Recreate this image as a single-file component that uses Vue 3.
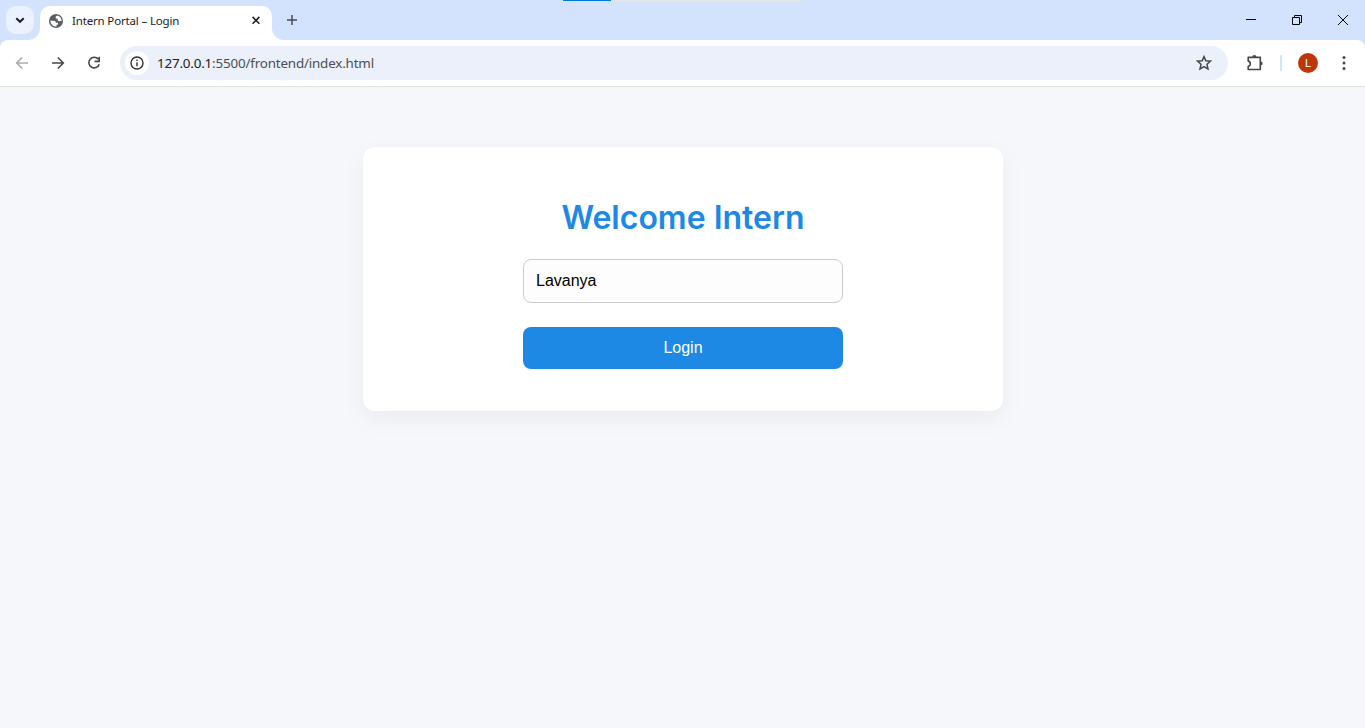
<script setup>
import { ref } from 'vue'

const name = ref('Lavanya')
</script>

<template>
  <div class="window">
    <header class="tabstrip">
      <span class="loading-track"><span class="loading-value"></span></span>
      <button class="tab-search" aria-label="Search tabs">
        <svg width="28" height="28" viewBox="0 0 28 28"><path d="M10.300 12.200 14 15.800l3.700-3.600" fill="none" stroke="#1c1e22" stroke-width="1.900" /></svg>
      </button>
      <div class="tab">
        <svg class="globe" width="14" height="14" viewBox="0 0 14 14">
          <circle cx="7" cy="7" r="7" fill="#5b5f64" />
          <path d="M8.300 1.500C7 2.100 6.300 2.900 6.700 3.900c.5.900 1.700.4 2 1.300.3 1-.2 1.500.7 1.900.8.400 1.800-.3 3.200.1A5.700 5.700 0 0 0 8.300 1.500Z" fill="#fff" />
          <path d="M1.400 6.700h2.800c1.900 0 2.700.8 2.700 2.100H9v1.100c0 .8-.7.800-1.500.9v1.700A5.700 5.700 0 0 1 1.400 6.700Z" fill="#fff" />
        </svg>
        <span class="tab-title">Intern Portal – Login</span>
        <svg class="tab-close" width="16" height="16" viewBox="0 0 16 16"><path d="m4.600 3.900 6.800 6.800m0-6.800-6.800 6.800" stroke="#1f2023" stroke-width="1.600" /></svg>
      </div>
      <svg class="new-tab" width="16" height="16" viewBox="0 0 16 16"><path d="M8 3v10M3 8h10" stroke="#484c52" stroke-width="1.500" /></svg>
      <div class="window-controls">
        <svg width="46" height="40" viewBox="0 0 46 40"><path d="M18 19.500h10" stroke="#000" /></svg>
        <svg width="46" height="40" viewBox="0 0 46 40"><path d="M18.500 17.500h7v7h-7zM20.500 17.500v-2h7v7h-2" fill="none" stroke="#000" /></svg>
        <svg width="46" height="40" viewBox="0 0 46 40"><path d="m18 15 10 10m0-10-10 10" stroke="#000" /></svg>
      </div>
    </header>

    <nav class="toolbar">
      <svg class="nav-icon" width="36" height="36" viewBox="0 0 36 36"><path d="M24 18H12.700m5.500-5.500-5.500 5.500 5.500 5.500" fill="none" stroke="#aaa" stroke-width="1.600" /></svg>
      <svg class="nav-icon" width="36" height="36" viewBox="0 0 36 36"><path d="M12 18h11.300m-5.500-5.500 5.500 5.500-5.500 5.500" fill="none" stroke="#45474a" stroke-width="1.600" /></svg>
      <svg class="nav-icon" width="36" height="36" viewBox="0 0 36 36"><path d="M22.300 14.300A5.300 5.300 0 1 0 23.200 19.200M23.200 11.800v4.600h-4.600" fill="none" stroke="#45474a" stroke-width="1.600" /></svg>
      <div class="address">
        <span class="site-info">
          <svg width="16" height="16" viewBox="0 0 16 16"><circle cx="8" cy="8" r="6" fill="none" stroke="#303236" stroke-width="1.400" /><path d="M8 7.300v4M8 4.600v1.500" stroke="#303236" stroke-width="1.400" /></svg>
        </span>
        <span class="url"><span class="host">127.0.0.1</span><span class="path">:5500/frontend/index.html</span></span>
        <svg class="star" width="18" height="18" viewBox="0 0 18 18"><path d="m9 2.600 1.800 4.200 4.700.4-3.500 3.100 1 4.600L9 12.500l-4 2.400 1-4.600-3.500-3.100 4.700-.4Z" fill="none" stroke="#45474a" stroke-width="1.500" /></svg>
      </div>
      <svg class="extensions" width="20" height="20" viewBox="0 0 20 20">
        <path d="M3.200 4.400h12.100v12.100H3.200v-3.200c2.800-.4 2.800-4.800 0-5.200Z" fill="none" stroke="#45474a" stroke-width="1.600" stroke-linejoin="round" />
        <path d="M7.200 4.200a2.100 2.100 0 0 1 4.200 0M15.500 8.300a2.100 2.100 0 0 1 0 4.200" fill="#45474a" />
      </svg>
      <span class="divider"></span>
      <span class="avatar">L</span>
      <svg class="menu" width="16" height="20" viewBox="0 0 16 20"><g fill="#45474a"><circle cx="8" cy="4.500" r="1.500" /><circle cx="8" cy="10" r="1.500" /><circle cx="8" cy="15.500" r="1.500" /></g></svg>
    </nav>

    <main class="page">
      <form class="card" @submit.prevent>
        <h1>Welcome Intern</h1>
        <input v-model="name" type="text" aria-label="Name" />
        <button class="login" type="submit">Login</button>
      </form>
    </main>
  </div>
</template>

<style>
body {
  overflow: hidden;
}
</style>

<style scoped>
.window {
  display: flex;
  flex-direction: column;
  height: 728px;
  background: #d3e2fd;
  font-family: "Noto Sans", "Open Sans", sans-serif;
}
.window svg {
  display: block;
  flex: none;
}
.tabstrip {
  position: relative;
  display: flex;
  height: 40px;
}
.loading-track {
  position: absolute;
  top: 0;
  left: 563px;
  width: 241px;
  height: 1px;
  background: #e5e5e5;
}
.loading-value {
  display: block;
  width: 48px;
  height: 1px;
  background: #0078d7;
}
.tab-search {
  width: 28px;
  height: 28px;
  margin: 6px 6px 0;
  padding: 0;
  border: 0;
  border-radius: 10px;
  background: #ebf1fd;
}
.tab {
  position: relative;
  display: flex;
  align-items: center;
  box-sizing: border-box;
  width: 232px;
  height: 34px;
  margin-top: 6px;
  padding: 0 8px 5px 9px;
  border-radius: 10px 10px 0 0;
  background: #fff;
}
.tab::before,
.tab::after {
  content: "";
  position: absolute;
  bottom: 0;
  width: 12px;
  height: 12px;
}
.tab::before {
  right: 100%;
  background: radial-gradient(circle at 0 0, transparent 11.500px, #fff 12.500px);
}
.tab::after {
  left: 100%;
  background: radial-gradient(circle at 100% 0, transparent 11.500px, #fff 12.500px);
}
.tab-title {
  flex: 1;
  margin-left: 9px;
  color: #1f2023;
  font-size: 11.500px;
  letter-spacing: -0.160px;
  line-height: 16px;
  white-space: nowrap;
}
.new-tab {
  margin: 12px 0 0 12px;
}
.window-controls {
  display: flex;
  margin-left: auto;
  margin-right: -1px;
}
.toolbar {
  display: flex;
  align-items: center;
  box-sizing: border-box;
  height: 47px;
  padding-left: 4px;
  border-bottom: 1px solid #dfe1e5;
  border-radius: 8px 8px 0 0;
  background: #fff;
}
.address {
  display: flex;
  align-items: center;
  box-sizing: border-box;
  width: 1108px;
  height: 34px;
  margin-left: 8px;
  padding: 0 15px 0 5px;
  border-radius: 17px;
  background: #ebf0fa;
}
.site-info {
  display: grid;
  place-items: center;
  width: 24px;
  height: 24px;
  border-radius: 50%;
  background: #fff;
}
.url {
  flex: 1;
  margin-left: 8px;
  font-size: 13.400px;
  letter-spacing: -0.180px;
  line-height: 20px;
  white-space: nowrap;
}
.host {
  color: #202124;
}
.path {
  color: #4b4e54;
}
.extensions {
  margin-left: 17px;
}
.divider {
  width: 2px;
  height: 16px;
  margin-left: 15px;
  background: #d3e2fd;
}
.avatar {
  width: 20px;
  height: 20px;
  margin-left: 16px;
  border-radius: 50%;
  background: #bf360c;
  color: #fff;
  font: 11px/21px Roboto, sans-serif;
  text-align: center;
}
.menu {
  margin-left: 18px;
}
.page {
  flex: 1;
  padding-top: 60px;
  background: #f5f7fb;
}
.card {
  display: flex;
  flex-direction: column;
  align-items: center;
  box-sizing: border-box;
  width: 640px;
  height: 264px;
  margin: 0 auto 0 363px;
  padding-top: 51px;
  border-radius: 12px;
  background: #fff;
  box-shadow: 0 8px 24px rgba(0, 0, 0, 0.050);
}
h1 {
  margin: 0 0 22px;
  color: #1e88e5;
  font: 600 32px/39px Inter, sans-serif;
  white-space: nowrap;
}
input {
  box-sizing: border-box;
  width: 320px;
  height: 44px;
  margin: 0 0 24px;
  padding: 0 12px;
  border: 1px solid #ccc;
  border-radius: 8px;
  outline: 0;
  background: #fdfdfd;
  color: #000;
  font: 16px "Liberation Sans", sans-serif;
}
.login {
  width: 320px;
  height: 42px;
  padding: 0;
  border: 0;
  border-radius: 8px;
  background: #1e88e5;
  color: #fff;
  font: 16px "Liberation Sans", sans-serif;
}
</style>
